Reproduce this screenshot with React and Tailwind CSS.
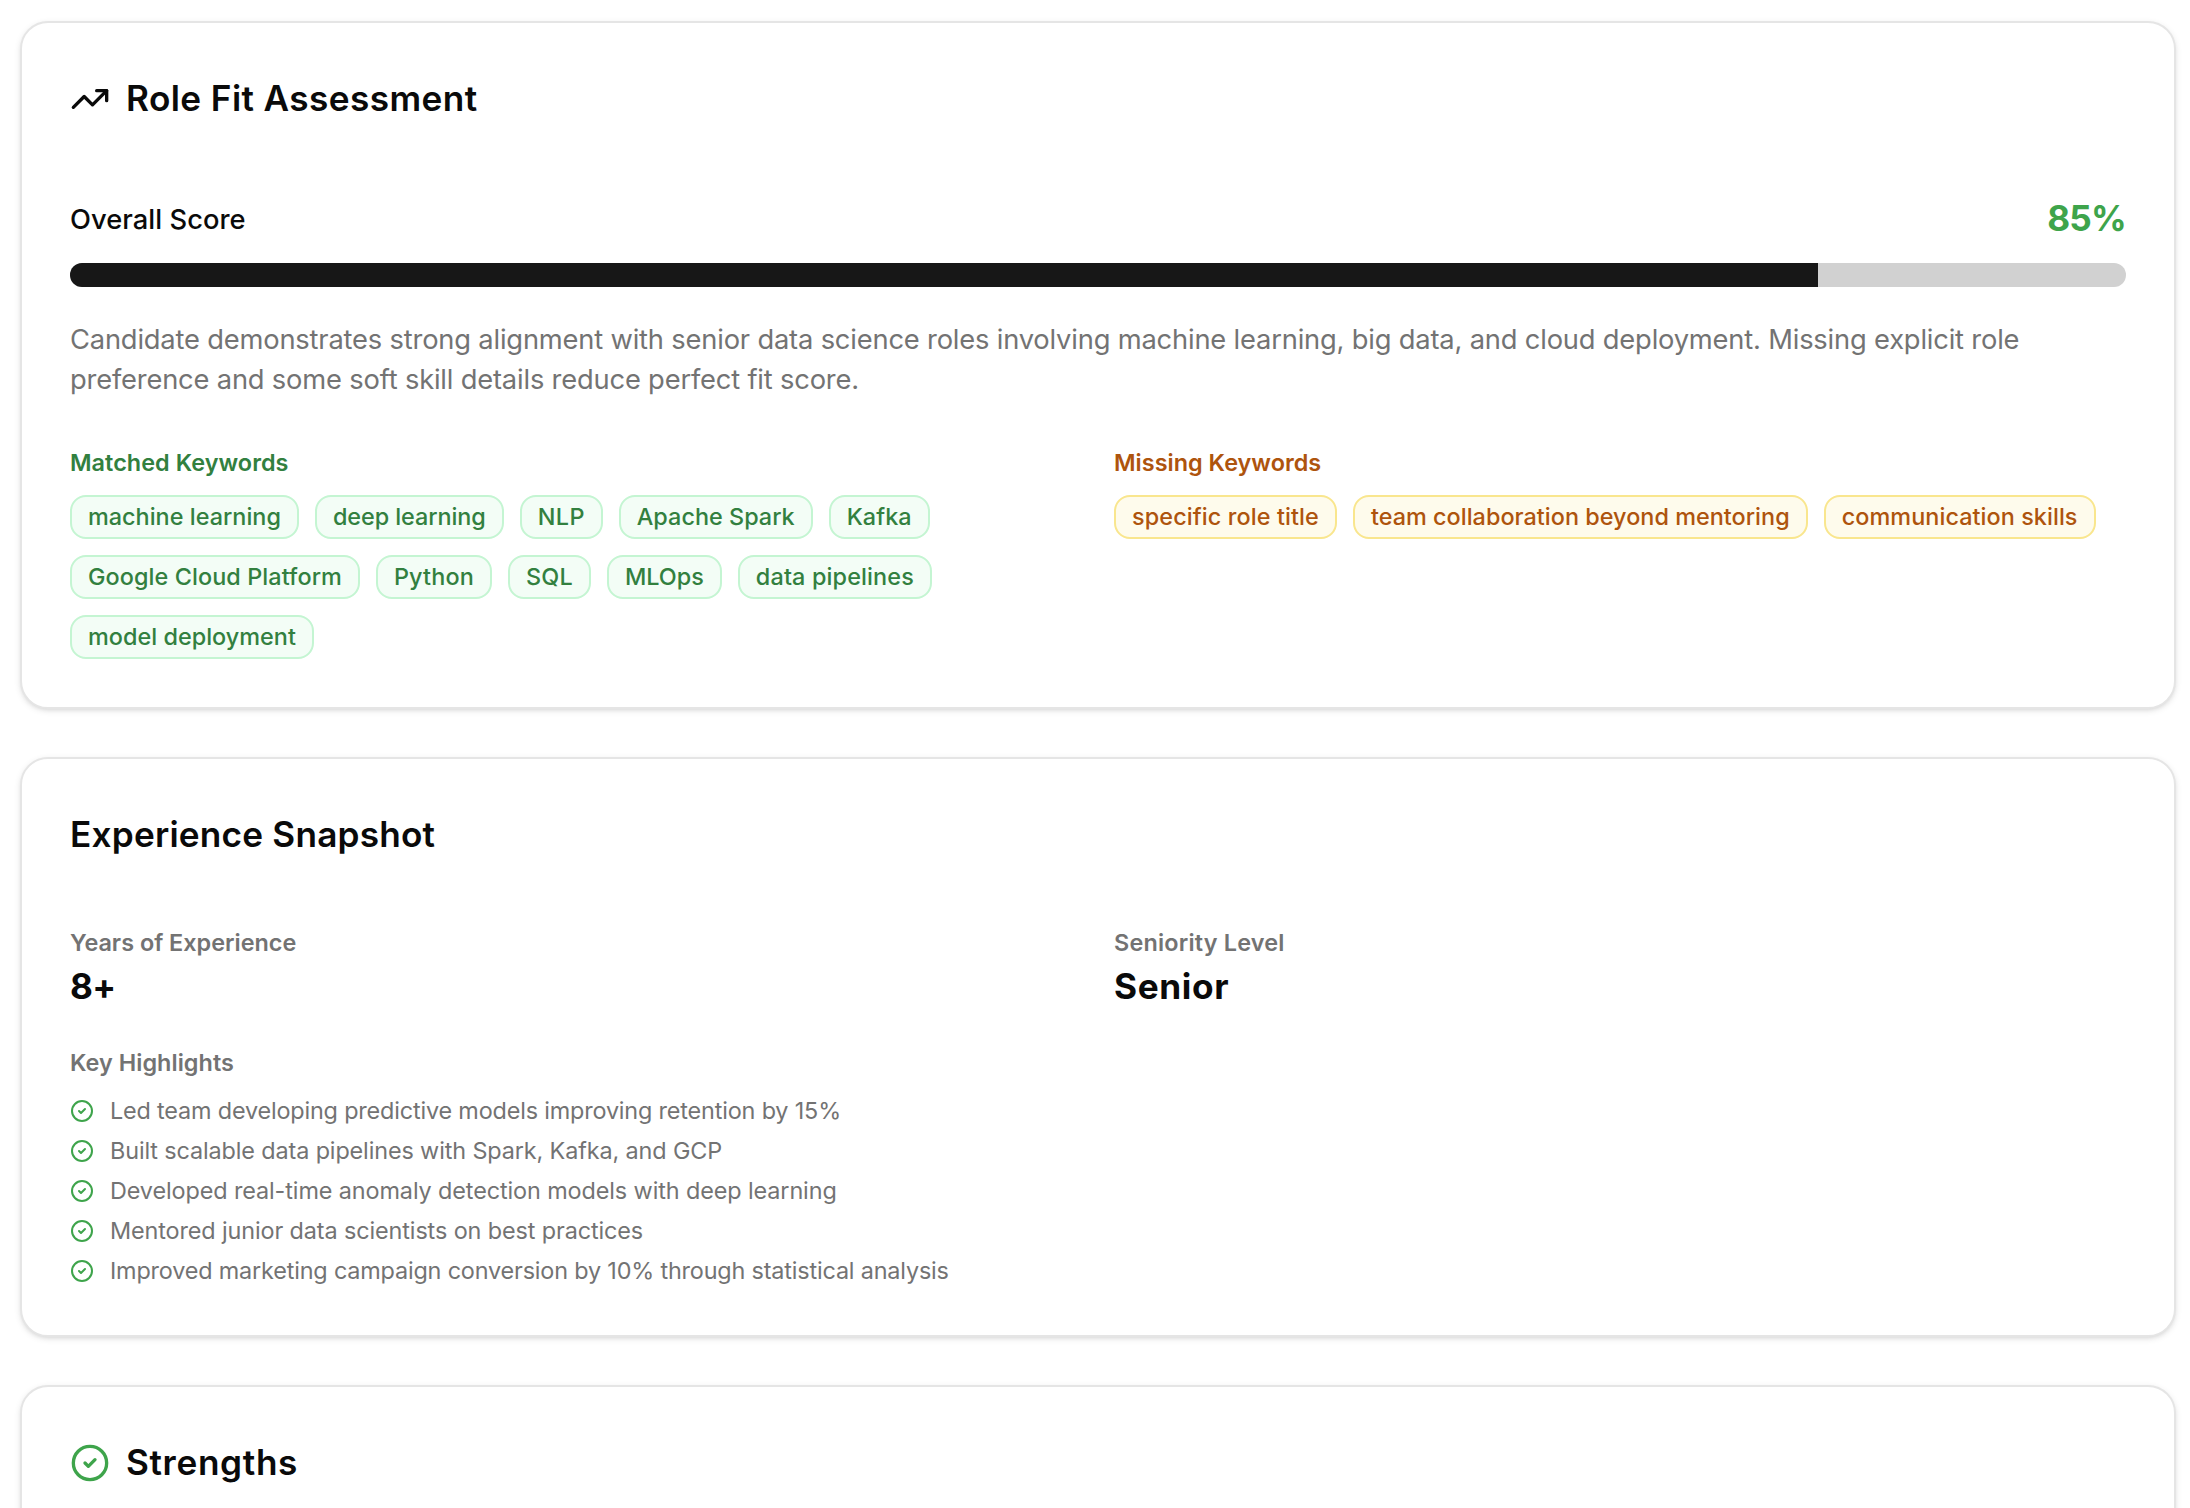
import React from 'react';
import { TrendingUp, CircleCheck } from 'lucide-react';

const SCORE = 85;

const MATCHED = [
  { label: 'machine learning', tracking: 'tracking-[0.02px]' },
  { label: 'deep learning', tracking: 'tracking-[-0.06px]' },
  { label: 'NLP', tracking: 'tracking-[0.35px]' },
  { label: 'Apache Spark', tracking: 'tracking-[0.02px]' },
  { label: 'Kafka', tracking: 'tracking-[0.07px]' },
  { label: 'Google Cloud Platform', tracking: 'tracking-[0.09px]' },
  { label: 'Python', tracking: 'tracking-[0.15px]' },
  { label: 'SQL', tracking: 'tracking-[0.23px]' },
  { label: 'MLOps', tracking: 'tracking-normal' },
  { label: 'data pipelines', tracking: 'tracking-[0.14px]' },
  { label: 'model deployment', tracking: 'tracking-[0.03px]' },
];

const MISSING = [
  { label: 'specific role title', tracking: 'tracking-[0.11px]' },
  { label: 'team collaboration beyond mentoring', tracking: 'tracking-[0.03px]' },
  { label: 'communication skills', tracking: 'tracking-[0.07px]' },
];

const HIGHLIGHTS = [
  { text: 'Led team developing predictive models improving retention by 15%', tracking: 'tracking-[-0.165px]' },
  { text: 'Built scalable data pipelines with Spark, Kafka, and GCP', tracking: 'tracking-[-0.12px]' },
  { text: 'Developed real-time anomaly detection models with deep learning', tracking: 'tracking-[-0.1px]' },
  { text: 'Mentored junior data scientists on best practices', tracking: 'tracking-[-0.11px]' },
  { text: 'Improved marketing campaign conversion by 10% through statistical analysis', tracking: 'tracking-[-0.17px]' },
];

function Card({ children }) {
  return (
    <section className="rounded-[28px] border-2 border-[#e5e5e5] bg-white p-12 shadow-[0_2px_6px_rgba(0,0,0,0.1),0_2px_4px_-2px_rgba(0,0,0,0.1)]">
      {children}
    </section>
  );
}

function CardTitle({ icon, tracking, children }) {
  return (
    <h2 className={`flex items-center gap-4 text-[35.2px] leading-[54px] font-semibold ${tracking}`}>
      {icon}
      <span className="pb-0.5">{children}</span>
    </h2>
  );
}

function Badge({ color, tracking, children }) {
  return (
    <span className={`rounded-2xl border-2 px-4 py-1 text-[23.4px] leading-8 font-medium whitespace-nowrap ${color} ${tracking}`}>
      {children}
    </span>
  );
}

function Stat({ label, value, labelTracking, valueTracking }) {
  return (
    <div>
      <p className={`text-[23.4px] leading-8 font-semibold text-[#737373] ${labelTracking}`}>{label}</p>
      <p className={`pb-0.5 text-[35.2px] leading-[54px] font-bold ${valueTracking}`}>{value}</p>
    </div>
  );
}

function App() {
  return (
    <main className="flex h-[1508px] flex-col gap-12 overflow-hidden bg-white pt-[21px] pr-[14px] pl-5 font-['Inter',sans-serif] text-[#0a0a0a] *:shrink-0">
      {/* Role fit */}
      <Card>
        <CardTitle tracking="tracking-[0.4px]" icon={<TrendingUp className="size-10" />}>
          Role Fit Assessment
        </CardTitle>

        <div className="mt-16 flex items-center justify-between">
          <span className="pt-0.5 text-[27.3px] leading-10 font-medium tracking-[0.05px]">Overall Score</span>
          <span className="pb-0.5 text-[35.2px] leading-[54px] font-bold tracking-[-0.8px] text-[#3ea44b]">{SCORE}%</span>
        </div>
        <div className="mt-4 h-6 overflow-hidden rounded-full bg-[#d1d1d1]">
          <div className="h-full bg-[#171717]" style={{ width: `${SCORE}%` }} />
        </div>
        <p className="mt-[33px] text-[27.3px] leading-10 tracking-[-0.18px] text-[#737373]">
          Candidate demonstrates strong alignment with senior data science roles involving machine learning, big data, and cloud deployment. Missing explicit role preference and some soft skill details reduce perfect fit score.
        </p>

        <div className="mt-[47px] grid grid-cols-2 gap-8">
          <div>
            <h3 className="mb-4 text-[23.4px] leading-8 font-semibold tracking-[0.05px] text-[#32803f]">Matched Keywords</h3>
            <div className="flex flex-wrap gap-4">
              {MATCHED.map(k => (
                <Badge key={k.label} tracking={k.tracking} color="border-[#c4f5d2] bg-[#f3fdf6] text-[#32803f]">
                  {k.label}
                </Badge>
              ))}
            </div>
          </div>
          <div>
            <h3 className="mb-4 text-[23.4px] leading-8 font-semibold tracking-[0.03px] text-[#ae540d]">Missing Keywords</h3>
            <div className="flex flex-wrap gap-4">
              {MISSING.map(k => (
                <Badge key={k.label} tracking={k.tracking} color="border-[#f9e68e] bg-[#fefbec] text-[#ae540d]">
                  {k.label}
                </Badge>
              ))}
            </div>
          </div>
        </div>
      </Card>

      {/* Experience */}
      <Card>
        <CardTitle tracking="tracking-[0.2px]">Experience Snapshot</CardTitle>

        <div className="mt-16 grid grid-cols-2 gap-8">
          <Stat label="Years of Experience" value="8+" labelTracking="tracking-normal" valueTracking="tracking-[-0.6px]" />
          <Stat label="Seniority Level" value="Senior" labelTracking="tracking-[0.2px]" valueTracking="tracking-[0.64px]" />
        </div>

        <h3 className="mt-8 mb-4 text-[23.4px] leading-8 font-semibold tracking-[0.05px] text-[#737373]">Key Highlights</h3>
        <ul className="space-y-2">
          {HIGHLIGHTS.map(h => (
            <li key={h.text} className={`flex items-center gap-4 text-[23.4px] leading-8 text-[#737373] ${h.tracking}`}>
              <CircleCheck className="size-6 shrink-0 text-[#3ea44b]" />
              {h.text}
            </li>
          ))}
        </ul>
      </Card>

      {/* Strengths */}
      <Card>
        <CardTitle tracking="tracking-[0.65px]" icon={<CircleCheck className="size-10 text-[#3ea44b]" />}>
          Strengths
        </CardTitle>
        <div className="h-16" />
      </Card>
    </main>
  );
}

export default App;
